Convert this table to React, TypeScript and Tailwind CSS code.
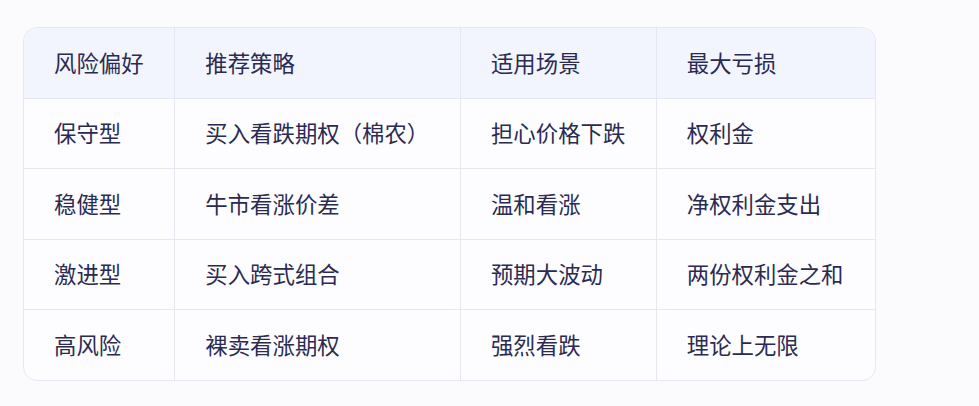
const HEADERS = ['风险偏好', '推荐策略', '适用场景', '最大亏损'];

const ROWS = [
  ['保守型', '买入看跌期权（棉农）', '担心价格下跌', '权利金'],
  ['稳健型', '牛市看涨价差', '温和看涨', '净权利金支出'],
  ['激进型', '买入跨式组合', '预期大波动', '两份权利金之和'],
  ['高风险', '裸卖看涨期权', '强烈看跌', '理论上无限'],
];

const COL_WIDTHS = ['w-[151px]', 'w-[286px]', 'w-[196px]', 'w-[219px]'];

export default function App() {
  return (
    <div
      className="min-h-[406px] w-[979px] bg-[#fbfbfe] pl-[23px] pt-[27px]"
      style={{ fontFamily: '"Noto Sans CJK SC", "Noto Sans", sans-serif' }}
    >
      <div className="w-[853px] overflow-hidden rounded-[14px] border border-[#e6e8f1] bg-[#fdfdff]">
        <table className="w-full border-collapse text-[22.4px] text-[#2b2b52]">
          <thead>
            <tr className="h-[70px] bg-[#f2f5fe]">
              {HEADERS.map((h, i) => (
                <th
                  key={h}
                  className={`${COL_WIDTHS[i]} ${i > 0 ? 'border-l border-[#e6e8f1]' : ''} pl-[30px] text-left font-normal`}
                >
                  {h}
                </th>
              ))}
            </tr>
          </thead>
          <tbody>
            {ROWS.map((row) => (
              <tr key={row[0]} className="h-[70.5px] border-t border-[#e6e8f1]">
                {row.map((cell, i) => (
                  <td
                    key={i}
                    className={`${i > 0 ? 'border-l border-[#e6e8f1]' : ''} pl-[30px] text-left`}
                  >
                    {cell}
                  </td>
                ))}
              </tr>
            ))}
          </tbody>
        </table>
      </div>
    </div>
  );
}
